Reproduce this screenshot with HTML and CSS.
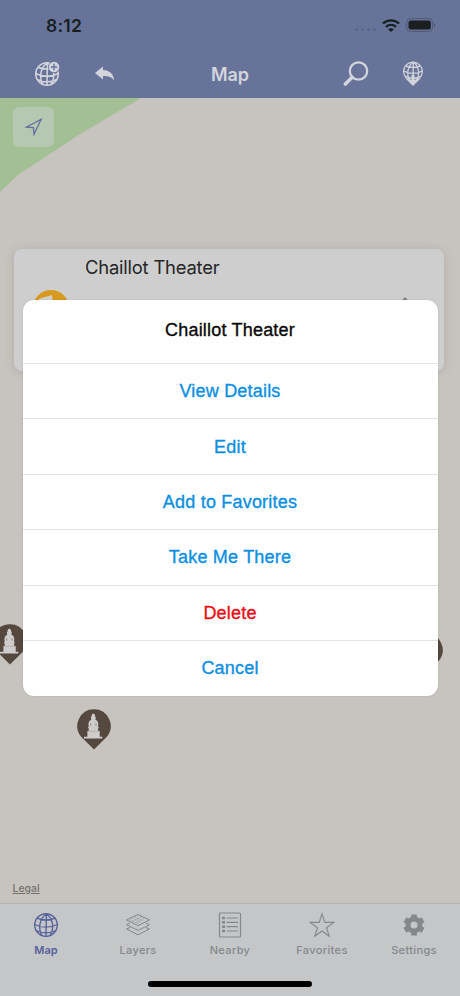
FILE: index.html
```html
<!DOCTYPE html>
<html lang="en">
<head>
<meta charset="utf-8">
<title>Map</title>
<link rel="stylesheet" href="styles.css">
</head>
<body>
<svg width="0" height="0" class="defs">
  <defs>
    <g id="globe" fill="none" stroke="currentColor">
      <circle cx="12" cy="12" r="11.300"/>
      <path d="M12.500 .7C5 6 4 16 8 22.500M12.500 .7C19.500 6 20.500 16 16 22.500M12.500 .7C12.300 9 12 16 12 23.300M3 5.200C8 7.600 16 7.600 21 5.200M.7 11.500C7 15 17 15 23.300 11.500M2.200 17.500C8 20.600 16 20.600 21.800 17.500"/>
    </g>
    <g id="pin">
      <path fill="#54483f" d="M17 .3a16.700 16.700 0 0 1 12.600 27.600L17 40.500 4.400 27.900A16.700 16.700 0 0 1 17 .3z"/>
      <path fill="#cfcdcb" d="M16.300 4.500c1.200.3 1.900 1.500 1.900 3 .9.800.7 2.200 0 3.200 2 .8 2.700 1.600 3 3.700.3 1.300-.2 2.200-.4 2.900 1.200.6 1.200 1.900.1 2.400l.4 2.200h1.400v5.900h2.600v1.800H7v-1.800h3.400v-5.900h1.100l.4-2.200c-1.100-.5-1.100-1.800.1-2.400-.4-.9-.8-1.600-.5-2.900.4-2.100 1.200-2.900 3-3.700-.8-1-.9-2.400 0-3.200 0-1.500.6-2.700 1.800-3z"/>
      <path fill="none" stroke="#99938e" stroke-width=".5" d="M10.500 22.300h12"/>
      <path fill="none" stroke="#756b64" stroke-width=".8" d="M13.700 14.500v2M19 14.500v2"/>
    </g>
  </defs>
</svg>
<div class="screen">
  <header class="header">
    <div class="status">
      <span class="time">8:12</span>
      <div class="status-icons">
        <span class="dots"><i></i><i></i><i></i><i></i></span>
        <svg class="wifi" width="18" height="13" viewBox="0 0 18 13"><g fill="none" stroke="#152020" stroke-width="2.300"><path d="M.9 4.500C5.500.2 12.500.2 17.100 4.500"/><path d="M4 7.900c2.900-2.600 7.100-2.600 10 0"/></g><path fill="#152020" d="M9 13L6 10.300c1.700-1.500 4.300-1.500 6 0z"/></svg>
        <svg width="30" height="14" viewBox="0 0 30 14"><rect x=".6" y=".6" width="26" height="12.800" rx="4" fill="none" stroke="#505a72"/><rect x="2.500" y="2.500" width="22.300" height="9" rx="2.300" fill="#1b1f22"/><path d="M28 5v4c1.500-.6 1.500-3.400 0-4z" fill="#4b5469"/></svg>
      </div>
    </div>
    <nav class="nav">
      <svg class="add" width="26" height="26" viewBox="0 0 26 26"><g transform="translate(0 1)"><use href="#globe" stroke-width="1.500"/></g><circle cx="19" cy="6" r="6" fill="#68739a"/><circle cx="19" cy="6" r="5.300" fill="currentColor"/><path d="M15.800 6h6.400M19 2.800v6.400" stroke="#68739a" stroke-width="1.400"/></svg>
      <svg class="back" width="20" height="16" viewBox="0 0 20 16"><path fill="currentColor" d="M0 7.100L8 .5v3.600c6.500.2 10.500 3.800 11.200 10.200-2.500-3.500-5.500-4.400-11.200-4.400v3.700z"/></svg>
      <h1>Map</h1>
      <svg class="search" width="26" height="26" viewBox="0 0 26 26"><circle cx="15.500" cy="10" r="8.700" fill="none" stroke="currentColor" stroke-width="2.200"/><path d="M9 16.500L2.400 23" stroke="currentColor" stroke-width="3.600" stroke-linecap="round"/></svg>
      <svg class="download" width="22" height="26" viewBox="0 0 22 26"><g transform="translate(1 .5) scale(.83)"><use href="#globe" stroke-width="1.500"/></g><path d="M3 17l6.500 2V14h3v5l6.500-2-8 8z" fill="currentColor"/></svg>
    </nav>
  </header>
  <main class="map">
    <svg class="park" width="144" height="96" viewBox="0 0 144 96"><path fill="#a3bf94" d="M0 0h141L80 36 18 77 0 94z"/></svg>
    <div class="locate"><svg width="18" height="18" viewBox="0 0 18 18"><path d="M16.200 1.200L1.300 9.200l7.100.5.600 6.600z" fill="none" stroke="#626f9b" stroke-width="1.300"/></svg></div>
    <svg class="marker marker-left" width="34" height="41"><use href="#pin"/></svg>
    <svg class="marker marker-right" width="34" height="41"><use href="#pin"/></svg>
    <svg class="marker marker-low" width="34" height="41"><use href="#pin"/></svg>
    <section class="card">
      <h2>Chaillot Theater</h2>
      <svg class="badge" width="36" height="36" viewBox="0 0 36 36"><circle cx="18" cy="18" r="18" fill="#d79a1f"/><path d="M6 9c4-2 7-2 13-4l1 8H6z" fill="#d3cfc4"/></svg>
      <svg class="chevron" width="12" height="8" viewBox="0 0 12 8"><path d="M6 0l5 5H1z" fill="#858585"/></svg>
    </section>
    <a class="legal">Legal</a>
  </main>
  <footer class="tabs">
    <div class="tab active"><svg width="26" height="26" viewBox="-1 -1 26 26"><use href="#globe" stroke-width="1.350"/></svg><span>Map</span></div>
    <div class="tab"><svg width="26" height="26" viewBox="0 0 26 26"><g fill="none" stroke="currentColor"><path d="M13 2.500l11.500 5.400L13 13.700 1.500 7.900z"/><path d="M5 11l-3.500 1.700L13 18.400l11.500-5.700L21 11M5 15.500L1.500 17 13 22.800 24.500 17 21 15.500"/><path stroke-dasharray="1 1.500" stroke-width=".8" d="M10 5l9 4.500M7.500 6.200l9 4.700M5 7.700l9 4.500M16 5l-9 4.500M19 6.400l-9 4.600"/></g></svg><span>Layers</span></div>
    <div class="tab"><svg width="26" height="26" viewBox="0 0 26 26"><g fill="none" stroke="currentColor" stroke-width="1.200"><rect x="2.500" y="1" width="21" height="24" rx="1"/><path d="M9.500 6H21M9.500 10.300H21M9.500 14.700H21M9.500 19H21"/><path stroke-width="2.600" d="M5 6h3M5 10.300h3M5 14.700h3M5 19h3"/></g></svg><span>Nearby</span></div>
    <div class="tab"><svg width="26" height="26" viewBox="0 0 26 26"><path d="M13 1.800l2.800 8.600h9l-7.300 5.300 2.800 8.600-7.300-5.300-7.300 5.300 2.800-8.600-7.300-5.300h9z" fill="none" stroke="currentColor" stroke-width="1.100"/></svg><span>Favorites</span></div>
    <div class="tab"><svg width="26" height="26" viewBox="0 0 26 26"><circle cx="13" cy="13" r="6" fill="none" stroke="currentColor" stroke-width="5"/><g stroke="currentColor" stroke-width="5.600"><path d="M13 2.500V7M13 19v4.500M3.900 7.750L8 10.100M18 15.900l4.100 2.350M3.900 18.250L8 15.900M18 10.100l4.100-2.350"/></g></svg><span>Settings</span></div>
  </footer>
  <div class="home"></div>
  <div class="dialog">
    <div class="row title"><span>Chaillot Theater</span></div>
    <div class="row"><span>View Details</span></div>
    <div class="row"><span>Edit</span></div>
    <div class="row"><span>Add to Favorites</span></div>
    <div class="row"><span>Take Me There</span></div>
    <div class="row danger"><span>Delete</span></div>
    <div class="row"><span>Cancel</span></div>
  </div>
</div>
</body>
</html>
```
FILE: styles.css
```css
* { box-sizing: border-box; }
body { margin: 0; font-family: Inter, "Liberation Sans", sans-serif; }
h1, h2 { margin: 0; }
svg { display: block; flex: none; }
.defs { position: absolute; }
.screen { position: relative; width: 460px; height: 996px; display: flex; flex-direction: column; overflow: hidden; }

.header { height: 98px; background: #68739a; color: #d3d5dc; }
.status { height: 50px; padding: 0 24px 0 46px; display: flex; justify-content: space-between; align-items: center; }
.time { font-size: 17.5px; font-weight: 600; color: #17201f; letter-spacing: .25px; }
.status-icons { display: flex; align-items: center; }
.dots { display: flex; gap: 3px; margin: 9px 6px 0 0; }
.dots i { width: 3px; height: 3px; border-radius: 50%; background: #5b6685; }
.wifi { margin-right: 6px; }
.nav { height: 48px; display: grid; grid-template-columns: 35px 60px 67px 136px 45px 59px 58px; align-items: center; }
.add { grid-column: 2; }
.back { grid-column: 3; }
.nav h1 { grid-column: 4; text-align: center; font-size: 18px; font-weight: 600; letter-spacing: -.1px; }
.search { grid-column: 6; }
.download { grid-column: 7; }

.map { position: relative; flex: 1; background: #c7c3be; padding: 9px 13px; overflow: hidden; }
.park { position: absolute; left: 0; top: 0; }
.locate { position: relative; width: 41px; height: 40px; border-radius: 6px; background: #b5c8b2; display: grid; place-items: center; }
.card { position: relative; height: 122px; margin: 102px 3px 0 1px; border-radius: 8px; background: #cecece; box-shadow: 0 1px 10px rgba(90, 90, 80, .2); }
.card h2 { padding: 7px 0 0 71px; font-size: 18.4px; line-height: 22px; font-weight: 400; color: #252525; letter-spacing: -.2px; }
.badge { position: absolute; left: 19px; top: 41px; }
.chevron { position: absolute; right: 33px; top: 48px; }
.marker { position: absolute; }
.marker-left { left: -7px; top: 526px; }
.marker-right { left: 409px; top: 535px; }
.marker-low { left: 77px; top: 611px; }
.legal { position: absolute; left: 12.5px; bottom: 8px; font-size: 10.3px; line-height: 14px; font-weight: 500; letter-spacing: .1px; color: #74726f; text-decoration: underline; }

.tabs { height: 93px; background: #c4c6c8; border-top: 1px solid #b3b1b0; padding-top: 8px; display: grid; grid-template-columns: repeat(5, 1fr); color: #85888b; }
.tab { display: flex; flex-direction: column; align-items: center; gap: 4px; font-size: 11px; line-height: 16px; font-weight: 500; letter-spacing: .35px; }
.tab.active { color: #56629a; font-weight: 600; }
.tab.active span { letter-spacing: .1px; }
.home { position: absolute; left: 148px; bottom: 9px; width: 164px; height: 6px; border-radius: 3px; background: #000; }

.dialog { position: absolute; left: 22.5px; top: 300px; width: 415px; height: 396px; background: #fff; border-radius: 11px; box-shadow: 0 0 2px rgba(0, 0, 0, .12); font-family: "Liberation Sans", sans-serif; font-size: 18px; letter-spacing: .2px; color: #0d8fdf; display: grid; grid-template-rows: 63px repeat(6, 55.4px); overflow: hidden; }
.row { display: flex; align-items: center; justify-content: center; padding-top: 1px; border-top: 1px solid #e4e4e4; -webkit-text-stroke: .35px currentColor; }
.row.title { border-top: 0; color: #090909; padding-bottom: 4px; }
.row.danger { color: #eb1015; }
```
